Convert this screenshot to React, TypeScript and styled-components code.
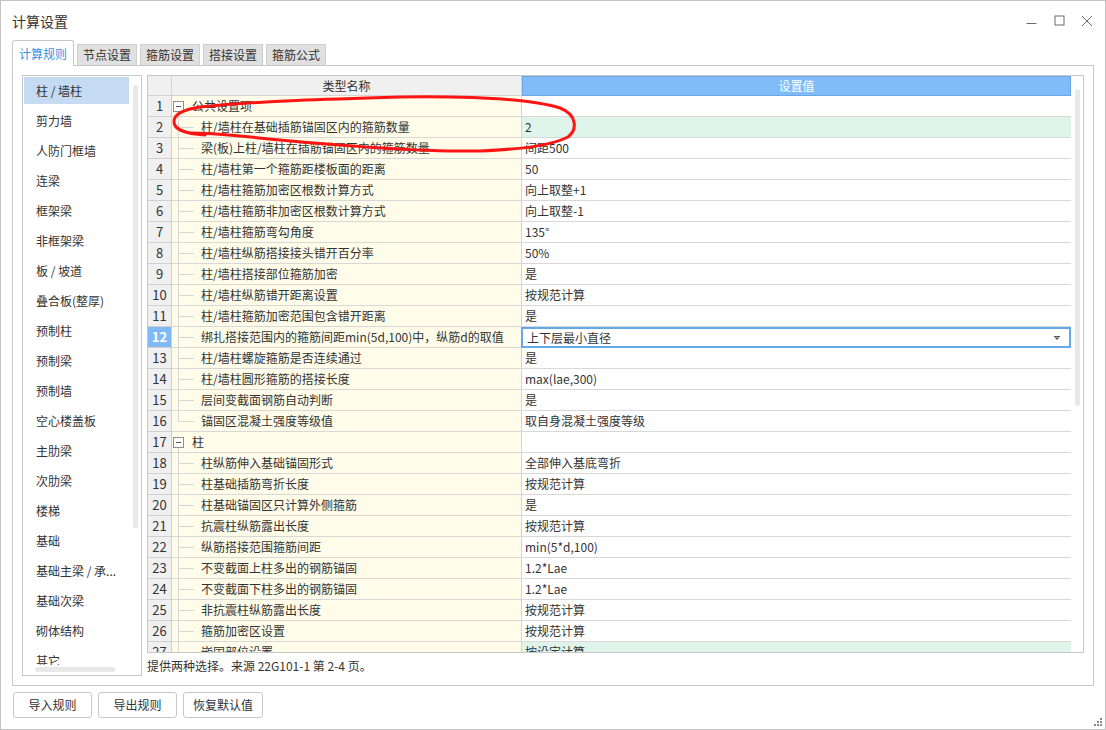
import React from 'react';
import styled, { createGlobalStyle, css } from 'styled-components';

const FONT = `"Noto Sans CJK SC", "Microsoft YaHei", sans-serif`;

const Global = createGlobalStyle`
  html, body { margin: 0; padding: 0; background: #fff; }
  body { font-family: ${FONT}; color: #333; }
  *, *::before, *::after { box-sizing: border-box; }
`;

const Window = styled.div`
  position: relative;
  width: 1106px;
  height: 730px;
  border: 1px solid #c4c4c4;
  background: #fff;
  display: flex;
  flex-direction: column;
  font-family: ${FONT};
  font-size: 12px;
  color: #333;
`;

const TitleBar = styled.div`
  height: 39px;
  flex: none;
  display: flex;
  align-items: center;
  justify-content: space-between;
  padding: 0 4px 0 11px;
`;

const Title = styled.div`
  font-size: 14px;
  line-height: 20px;
  color: #333;
`;

const Controls = styled.div`
  display: flex;
`;

const ControlButton = styled.div`
  width: 28px;
  height: 28px;
  display: flex;
  align-items: center;
  justify-content: center;
`;

const TabStrip = styled.div`
  height: 26px;
  flex: none;
  display: flex;
  align-items: flex-end;
  gap: 3px;
  padding-left: 11px;
  margin-bottom: -1px;
  position: relative;
  z-index: 1;
`;

const Tab = styled.div<{ $active?: boolean }>`
  display: flex;
  align-items: center;
  justify-content: center;
  line-height: 16px;
  font-size: 12px;
  border: 1px solid #cfcfcf;
  border-bottom: none;
  ${(p) =>
    p.$active
      ? css`
          width: 62px;
          height: 26px;
          background: #fff;
          color: #3a8de4;
          border-color: #c8c8c8;
          border-radius: 3px 3px 0 0;
        `
      : css`
          width: 60px;
          height: 21px;
          margin-bottom: 1px;
          background: #e0e0e0;
          color: #333;
        `}
`;

const Panel = styled.div`
  flex: none;
  margin: 0 11px;
  height: 621px;
  border: 1px solid #c8c8c8;
  padding: 9px;
  display: flex;
  gap: 5px;
`;

const Sidebar = styled.div`
  width: 120px;
  flex: none;
  border: 1px solid #c8c8c8;
  display: grid;
  grid-template-columns: 107px 11px;
  grid-template-rows: 1fr 10px;
  overflow: hidden;
`;

const List = styled.div`
  padding-top: 1px;
  overflow: hidden;
  min-height: 0;
`;

const ListItem = styled.div<{ $selected?: boolean }>`
  height: 27px;
  margin: 0 1px 3px 1px;
  padding-left: 12px;
  display: flex;
  align-items: center;
  font-size: 12px;
  line-height: 16px;
  color: #333;
  white-space: nowrap;
  overflow: hidden;
  background: ${(p) => (p.$selected ? '#c4dbf2' : 'transparent')};
`;

const VTrack = styled.div<{ $pad: number }>`
  padding-top: ${(p) => p.$pad}px;
  padding-left: 3px;
`;

const VThumb = styled.div<{ $h: number; $w: number }>`
  width: ${(p) => p.$w}px;
  height: ${(p) => p.$h}px;
  background: #e8e8e8;
  border-radius: 3px;
`;

const HTrack = styled.div`
  grid-column: 1 / span 2;
  padding: 2px 0 0 12px;
`;

const HThumb = styled.div`
  width: 80px;
  height: 5px;
  background: #e8e8e8;
  border-radius: 3px;
`;

const RightColumn = styled.div`
  width: 937px;
  flex: none;
  display: flex;
  flex-direction: column;
`;

const TableFrame = styled.div`
  height: 578px;
  flex: none;
  border: 1px solid #c8c8c8;
  display: flex;
  overflow: hidden;
`;

const Grid = styled.div`
  width: 923px;
  flex: none;
  display: flex;
  flex-direction: column;
  overflow: hidden;
`;

const Row = styled.div<{ $header?: boolean }>`
  flex: none;
  display: grid;
  grid-template-columns: 24px 350px 549px;
  height: ${(p) => (p.$header ? 20 : 21)}px;
`;

const NumCell = styled.div<{ $active?: boolean }>`
  border-right: 1px solid #d0d0d0;
  border-bottom: 1px solid #d0d0d0;
  background: ${(p) => (p.$active ? '#7fbaf6' : '#f0f0f0')};
  color: ${(p) => (p.$active ? '#fff' : '#333')};
  font-weight: ${(p) => (p.$active ? 700 : 400)};
  font-size: 13px;
  line-height: 20px;
  text-align: center;
`;

const HeadCell = styled.div<{ $blue?: boolean }>`
  display: flex;
  align-items: center;
  justify-content: center;
  font-size: 12px;
  line-height: 16px;
  ${(p) =>
    p.$blue
      ? css`
          background: #80bcf7;
          border: 1px solid #68a8ea;
          color: #fff;
        `
      : css`
          background: #f0f0f0;
          border-right: 1px solid #d4d4d4;
          border-bottom: 1px solid #d4d4d4;
          color: #333;
        `}
`;

const NameCell = styled.div<{ $group?: boolean }>`
  display: flex;
  align-items: stretch;
  background: #fffdea;
  border-right: 1px solid #d4d4d4;
  border-bottom: 1px solid #d8d8d8;
  font-size: 12px;
  line-height: 20px;
  white-space: nowrap;
  overflow: hidden;
  ${(p) =>
    p.$group &&
    css`
      background: linear-gradient(#d0d0d0, #d0d0d0) 6px 15px / 1px 6px no-repeat, #fffdea;
    `}
`;

const Branch = styled.span<{ $last?: boolean }>`
  flex: none;
  width: 16px;
  margin: 0 7px 0 6px;
  background: linear-gradient(#d6d6d6, #d6d6d6) left top / 1px ${(p) => (p.$last ? '50%' : '100%')} no-repeat,
    linear-gradient(#d6d6d6, #d6d6d6) left center / 100% 1px no-repeat;
`;

const Toggle = styled.span`
  flex: none;
  align-self: center;
  width: 11px;
  height: 11px;
  margin: 0 8px 0 1px;
  border: 1px solid #8f8f8f;
  background: #fff;
  display: flex;
  align-items: center;
  justify-content: center;
`;

const Minus = styled.span`
  width: 5px;
  height: 1px;
  background: #555;
`;

const ValueCell = styled.div<{ $green?: boolean }>`
  background: ${(p) => (p.$green ? '#dff5ec' : '#fff')};
  border-bottom: 1px solid #d8d8d8;
  padding-left: 3px;
  font-size: 12px;
  line-height: 20px;
  white-space: nowrap;
  overflow: hidden;
`;

const SelectBox = styled.div`
  border: 2px solid #64aaea;
  margin-left: -1px;
  background: #fff;
  display: flex;
  align-items: center;
  justify-content: space-between;
  padding: 0 9px 0 4px;
  font-size: 12px;
  line-height: 16px;
`;

const ScrollCol = styled.div`
  width: 12px;
  flex: none;
  background: #fff;
  padding: 13px 0 0 4px;
`;

const Message = styled.div`
  padding-top: 5px;
  line-height: 16px;
  font-size: 12px;
  color: #333;
`;

const Footer = styled.div`
  flex: 1;
  display: flex;
  align-items: flex-start;
  gap: 6px;
  padding: 6px 2px 2px 12px;
`;

const Button = styled.div`
  height: 26px;
  min-width: 79px;
  padding: 0 9px;
  border: 1px solid #c8c8c8;
  border-radius: 3px;
  background: #fff;
  display: flex;
  align-items: center;
  justify-content: center;
  font-size: 12px;
  line-height: 16px;
  color: #333;
`;

const Grip = styled.svg`
  margin-left: auto;
  align-self: flex-end;
`;

const Annotation = styled.svg`
  position: absolute;
  left: -1px;
  top: -1px;
  pointer-events: none;
`;

type R = { n?: string; v?: string; g?: boolean; green?: boolean; last?: boolean; select?: boolean };

const rows: R[] = [
  { g: true, n: '公共设置项' },
  { n: '柱/墙柱在基础插筋锚固区内的箍筋数量', v: '2', green: true },
  { n: '梁(板)上柱/墙柱在插筋锚固区内的箍筋数量', v: '间距500' },
  { n: '柱/墙柱第一个箍筋距楼板面的距离', v: '50' },
  { n: '柱/墙柱箍筋加密区根数计算方式', v: '向上取整+1' },
  { n: '柱/墙柱箍筋非加密区根数计算方式', v: '向上取整-1' },
  { n: '柱/墙柱箍筋弯勾角度', v: '135°' },
  { n: '柱/墙柱纵筋搭接接头错开百分率', v: '50%' },
  { n: '柱/墙柱搭接部位箍筋加密', v: '是' },
  { n: '柱/墙柱纵筋错开距离设置', v: '按规范计算' },
  { n: '柱/墙柱箍筋加密范围包含错开距离', v: '是' },
  { n: '绑扎搭接范围内的箍筋间距min(5d,100)中，纵筋d的取值', v: '上下层最小直径', select: true },
  { n: '柱/墙柱螺旋箍筋是否连续通过', v: '是' },
  { n: '柱/墙柱圆形箍筋的搭接长度', v: 'max(lae,300)' },
  { n: '层间变截面钢筋自动判断', v: '是' },
  { n: '锚固区混凝土强度等级值', v: '取自身混凝土强度等级', last: true },
  { g: true, n: '柱' },
  { n: '柱纵筋伸入基础锚固形式', v: '全部伸入基底弯折' },
  { n: '柱基础插筋弯折长度', v: '按规范计算' },
  { n: '柱基础锚固区只计算外侧箍筋', v: '是' },
  { n: '抗震柱纵筋露出长度', v: '按规范计算' },
  { n: '纵筋搭接范围箍筋间距', v: 'min(5*d,100)' },
  { n: '不变截面上柱多出的钢筋锚固', v: '1.2*Lae' },
  { n: '不变截面下柱多出的钢筋锚固', v: '1.2*Lae' },
  { n: '非抗震柱纵筋露出长度', v: '按规范计算' },
  { n: '箍筋加密区设置', v: '按规范计算' },
  { n: '嵌固部位设置', v: '按设定计算', green: true },
];

const sideItems = [
  '柱 / 墙柱', '剪力墙', '人防门框墙', '连梁', '框架梁', '非框架梁', '板 / 坡道', '叠合板(整厚)',
  '预制柱', '预制梁', '预制墙', '空心楼盖板', '主肋梁', '次肋梁', '楼梯', '基础', '基础主梁 / 承...',
  '基础次梁', '砌体结构', '其它',
];

const tabs = ['计算规则', '节点设置', '箍筋设置', '搭接设置', '箍筋公式'];

const IconStroke = '#6b6b6b';

export default function App() {
  return (
    <Window>
      <Global />
      <TitleBar>
        <Title>计算设置</Title>
        <Controls>
          <ControlButton>
            <svg width="11" height="11" viewBox="0 0 11 11">
              <line x1="0.5" y1="8.5" x2="10.5" y2="8.5" stroke={IconStroke} strokeWidth="1" />
            </svg>
          </ControlButton>
          <ControlButton>
            <svg width="11" height="11" viewBox="0 0 11 11">
              <rect x="1" y="1" width="9" height="9" fill="none" stroke={IconStroke} strokeWidth="1" />
            </svg>
          </ControlButton>
          <ControlButton>
            <svg width="12" height="12" viewBox="0 0 12 12">
              <path d="M1 1 L11 11 M11 1 L1 11" stroke={IconStroke} strokeWidth="1" fill="none" />
            </svg>
          </ControlButton>
        </Controls>
      </TitleBar>

      <TabStrip>
        {tabs.map((t, i) => (
          <Tab key={t} $active={i === 0}>
            {t}
          </Tab>
        ))}
      </TabStrip>

      <Panel>
        <Sidebar>
          <List>
            {sideItems.map((s, i) => (
              <ListItem key={s} $selected={i === 0}>
                {s}
              </ListItem>
            ))}
          </List>
          <VTrack $pad={9}>
            <VThumb $w={5} $h={443} />
          </VTrack>
          <HTrack>
            <HThumb />
          </HTrack>
        </Sidebar>

        <RightColumn>
          <TableFrame>
            <Grid>
              <Row $header>
                <HeadCell />
                <HeadCell>类型名称</HeadCell>
                <HeadCell $blue>设置值</HeadCell>
              </Row>
              {rows.map((r, i) => (
                <Row key={i}>
                  <NumCell $active={r.select}>{i + 1}</NumCell>
                  <NameCell $group={r.g}>
                    {r.g ? (
                      <Toggle>
                        <Minus />
                      </Toggle>
                    ) : (
                      <Branch $last={r.last} />
                    )}
                    {r.n}
                  </NameCell>
                  {r.select ? (
                    <SelectBox>
                      <span>{r.v}</span>
                      <svg width="6" height="4" viewBox="0 0 6 4">
                        <rect x="0" y="0" width="6" height="1" fill="#555" />
                        <path d="M0.5 1.5 L5.5 1.5 L3 4 Z" fill="#555" />
                      </svg>
                    </SelectBox>
                  ) : (
                    <ValueCell $green={r.green}>{r.v}</ValueCell>
                  )}
                </Row>
              ))}
            </Grid>
            <ScrollCol>
              <VThumb $w={5} $h={317} />
            </ScrollCol>
          </TableFrame>
          <Message>提供两种选择。来源 22G101-1 第 2-4 页。</Message>
        </RightColumn>
      </Panel>

      <Footer>
        <Button>导入规则</Button>
        <Button>导出规则</Button>
        <Button>恢复默认值</Button>
        <Grip width="9" height="9" viewBox="0 0 9 9">
          <rect x="6" y="0" width="2" height="2" fill="#8a8a8a" />
          <rect x="3" y="3" width="2" height="2" fill="#8a8a8a" />
          <rect x="6" y="3" width="2" height="2" fill="#8a8a8a" />
          <rect x="0" y="6" width="2" height="2" fill="#8a8a8a" />
          <rect x="3" y="6" width="2" height="2" fill="#8a8a8a" />
          <rect x="6" y="6" width="2" height="2" fill="#8a8a8a" />
        </Grip>
      </Footer>

      <Annotation width="1106" height="730" viewBox="0 0 1106 730">
        <path
          d="M205 135 C 188 134, 174 130, 174 122 C 174 114, 182 110, 200 107 C 260 101, 330 99, 400 97 C 470 96, 530 99, 560 108 C 578 115, 577 130, 568 137 C 550 146, 522 149, 480 151 C 420 152, 330 145, 240 136 C 220 134, 200 133, 190 133"
          fill="none"
          stroke="#ff1414"
          strokeWidth="3"
          strokeLinecap="round"
          strokeLinejoin="round"
        />
      </Annotation>
    </Window>
  );
}
